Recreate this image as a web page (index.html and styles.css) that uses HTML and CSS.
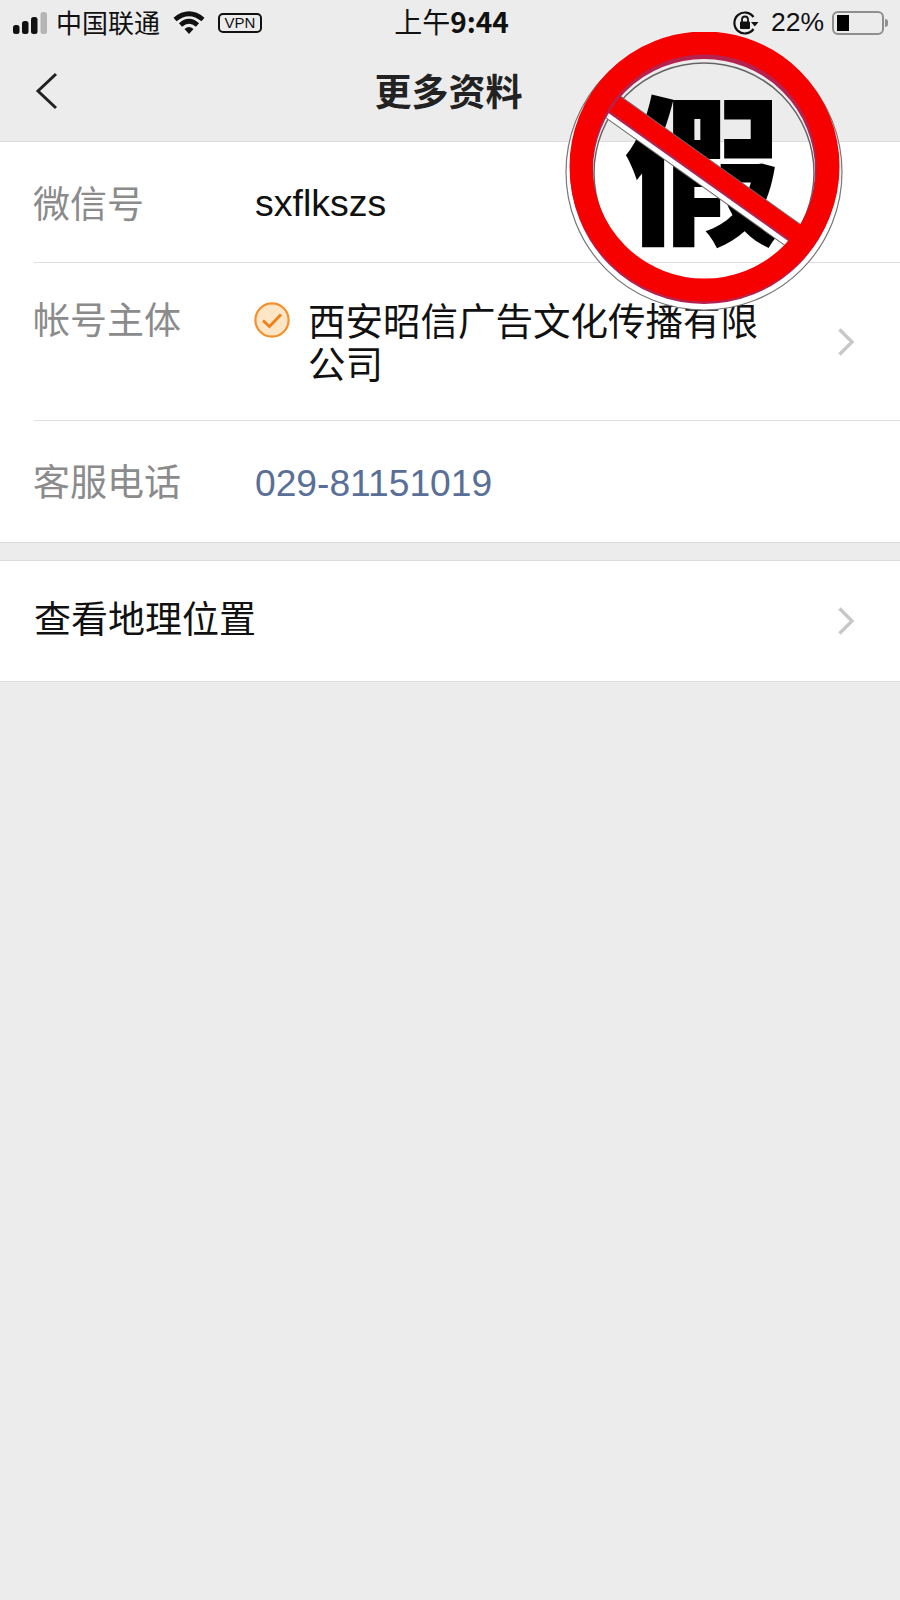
FILE: index.html
```html
<!DOCTYPE html>
<html>
<head>
	<title>更多资料</title>
	<meta name="viewport" content="width=device-width, initial-scale=1">
	<link rel="stylesheet" href="styles.css">
</head>
<body>
	<div id="frame">
		<div class="statusbar">
			<div class="status-left">
				<svg class="signal" width="35" height="22" viewBox="0 0 35 22">
					<rect x="0" y="13" width="6.500" height="9" rx="2.500" fill="#111"/>
					<rect x="9" y="9" width="6.500" height="13" rx="2.500" fill="#111"/>
					<rect x="18" y="5" width="6.500" height="17" rx="2.500" fill="#111"/>
					<rect x="27.500" y="0" width="6.500" height="22" rx="2.500" fill="#b5b5b5"/>
				</svg>
				<span class="carrier">中国联通</span>
				<svg class="wifi" width="32" height="24" viewBox="0 0 32 24">
					<path d="M2 8.500 Q16 -3 30 8.500" fill="none" stroke="#111" stroke-width="4.600"/>
					<path d="M7.500 14 Q16 6.500 24.500 14" fill="none" stroke="#111" stroke-width="4.600"/>
					<path d="M11.500 18 Q16 14 20.500 18 L16 23 Z" fill="#111"/>
				</svg>
				<span class="vpn">VPN</span>
			</div>
			<div class="status-time">上午<span class="time-digits">9:44</span></div>
			<div class="status-right">
				<svg class="lock" width="26" height="24" viewBox="0 0 26 24">
					<path d="M20.500 6 A10.500 10.500 0 1 0 20.500 18" fill="none" stroke="#111" stroke-width="2.200"/>
					<path d="M18 11 L25.500 11 L21.800 15.500 Z" fill="#111"/>
					<rect x="7" y="10.500" width="10" height="7.500" rx="1" fill="#111"/>
					<path d="M9 11 V8.500 A3 3 0 0 1 15 8.500 V11" fill="none" stroke="#111" stroke-width="1.800"/>
				</svg>
				<span class="battery-text">22%</span>
				<div class="battery"><div class="battery-level"></div></div>
				<div class="battery-tip"></div>
			</div>
		</div>

		<div class="navbar">
			<svg class="back" width="24" height="38" viewBox="0 0 24 38">
				<path d="M21 2 L3 19 L21 36" fill="none" stroke="#222" stroke-width="3"/>
			</svg>
			<div class="nav-title">更多资料</div>
		</div>

		<div class="group">
			<div class="row row-line">
				<div class="label">微信号</div>
				<div class="value latin wechat-id">sxflkszs</div>
			</div>
			<div class="row row-line row-subject">
				<div class="label">帐号主体</div>
				<svg class="verified" width="36" height="36" viewBox="0 0 36 36">
					<circle cx="18" cy="18" r="16.600" fill="#fde6c6" stroke="#f5902a" stroke-width="2.200"/>
					<path d="M9 18.500 L15.500 24.500 L27 12.500" fill="none" stroke="#f0811a" stroke-width="3"/>
				</svg>
				<div class="value subject">西安昭信广告文化传播有限公司</div>
				<svg class="chevron" width="18" height="30" viewBox="0 0 18 30">
					<path d="M2.500 2.500 L15 15 L2.500 27.500" fill="none" stroke="#c8c8c8" stroke-width="3.400"/>
				</svg>
			</div>
			<div class="row row-phone">
				<div class="label">客服电话</div>
				<div class="value latin phone">029-81151019</div>
			</div>
		</div>

		<div class="group group-second">
			<div class="row row-map">
				<div class="value">查看地理位置</div>
				<svg class="chevron" width="18" height="30" viewBox="0 0 18 30">
					<path d="M2.500 2.500 L15 15 L2.500 27.500" fill="none" stroke="#c8c8c8" stroke-width="3.400"/>
				</svg>
			</div>
		</div>

		<svg class="stamp" width="280" height="280" viewBox="0 0 280 280">
			<circle cx="140" cy="140" r="131.500" fill="none" stroke="#fff" stroke-width="13"/>
			<circle cx="140" cy="140" r="138" fill="none" stroke="#777" stroke-width="1.200"/>
			<circle cx="140" cy="141" r="110" fill="none" stroke="#666" stroke-width="1.500"/>
			<text class="stamp-char" x="140" y="200">假</text>
			<line x1="40" y1="68.500" x2="240" y2="211" stroke="#666" stroke-width="27"/>
			<line x1="40" y1="68.500" x2="240" y2="211" stroke="#fff" stroke-width="25"/>
			<line x1="40" y1="65.500" x2="240" y2="208" stroke="#b5224f" stroke-width="20"/>
			<line x1="40" y1="64" x2="240" y2="206.500" stroke="#f60000" stroke-width="18"/>
			<circle cx="140" cy="138" r="122.500" fill="none" stroke="#b5224f" stroke-width="23"/>
			<circle cx="140.500" cy="134.500" r="123.500" fill="none" stroke="#f60000" stroke-width="23"/>
		</svg>
	</div>
</body>
</html>
```

FILE: styles.css
```css
div {
	box-sizing: border-box;
}
body, html {
	font-family: "Noto Sans CJK SC", "Liberation Sans", sans-serif;
	margin: 0px;
	height: 100%;
	width: 100%;
	background: #ececec;
}
#frame {
	position: relative;
	width: 900px;
	height: 1600px;
	overflow: hidden;
	background: #ececec;
	color: #111;
}
.statusbar {
	height: 46px;
	padding: 0 12px 0 13px;
	display: grid;
	grid-template-columns: 1fr auto 1fr;
	align-items: center;
}
.status-left, .status-right {
	display: flex;
	align-items: center;
}
.status-right {
	justify-content: flex-end;
}
.carrier {
	margin-left: 8px;
	padding-bottom: 4px;
	font-size: 26px;
}
.wifi {
	margin-left: 13px;
}
.vpn {
	margin-left: 13px;
	width: 44px;
	height: 20px;
	border: 2px solid #111;
	border-radius: 5px;
	font-family: "Liberation Sans", sans-serif;
	font-size: 15px;
	line-height: 16px;
	text-align: center;
	box-sizing: border-box;
}
.status-time {
	font-size: 28px;
	padding-bottom: 4px;
	padding-left: 2px;
}
.time-digits {
	font-weight: 700;
}
.lock {
	margin-right: 12px;
}
.battery-text {
	font-family: "Liberation Sans", sans-serif;
	font-size: 26.500px;
	margin-right: 8px;
	padding-bottom: 2px;
}
.battery {
	width: 52px;
	height: 24px;
	border: 2px solid #8e8e8e;
	border-radius: 6px;
	padding: 2px 3px;
}
.battery-level {
	width: 12px;
	height: 100%;
	background: #000;
}
.battery-tip {
	width: 3px;
	height: 8px;
	margin-left: 1px;
	background: #8e8e8e;
	border-radius: 0 3px 3px 0;
}
.navbar {
	height: 96px;
	position: relative;
	display: flex;
	align-items: center;
	justify-content: center;
	padding-right: 3px;
	padding-bottom: 8px;
	border-bottom: 1px solid #dcdcdc;
}
.back {
	position: absolute;
	left: 35px;
	top: 26px;
}
.nav-title {
	font-size: 37px;
	font-weight: 700;
	color: #222;
}
.group {
	background: #fff;
	border-bottom: 1px solid #dcdcdc;
}
.group-second {
	margin-top: 17px;
	border-top: 1px solid #dcdcdc;
}
.row {
	height: 121px;
	margin-left: 34px;
	display: flex;
	align-items: center;
	font-size: 37px;
	line-height: 44px;
}
.row-line {
	border-bottom: 1px solid #dedede;
}
.row-subject {
	height: 158px;
	align-items: flex-start;
	padding-top: 33px;
	position: relative;
}
.row-phone {
	padding-bottom: 4px;
}
.label {
	width: 222px;
	margin-left: -1px;
	color: #8b8b8b;
	flex-shrink: 0;
}
.latin {
	font-family: "Liberation Sans", sans-serif;
	font-size: 37.500px;
}
.wechat-id {
	padding-top: 2px;
}
.phone {
	color: #5a6f97;
	padding-top: 6px;
	font-size: 37.200px;
}
.verified {
	margin-top: 6px;
	margin-left: -1px;
	flex-shrink: 0;
}
.subject {
	width: 462px;
	margin-left: 18px;
	padding-top: 1px;
	font-size: 37.500px;
	line-height: 43px;
}
.row-subject .chevron {
	position: absolute;
	right: 45px;
	top: 64px;
}
.row-map {
	justify-content: space-between;
	padding-right: 45px;
	padding-bottom: 8px;
	height: 120px;
}
.row-map .chevron {
	margin-top: 8px;
}
.stamp {
	position: absolute;
	left: 564px;
	top: 32px;
}
.stamp-char {
	font-family: "Noto Sans CJK SC", sans-serif;
	font-size: 160px;
	font-weight: 900;
	text-anchor: middle;
	fill: #000;
}
```
